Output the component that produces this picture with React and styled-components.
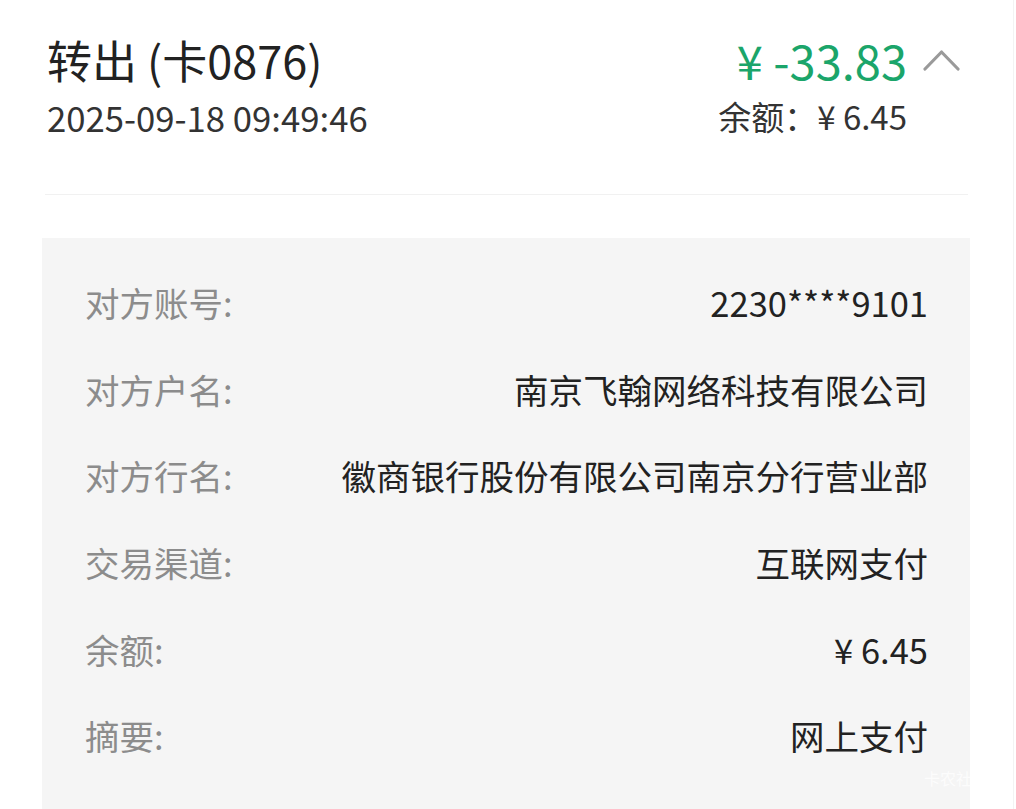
import React from "react";
import styled, { createGlobalStyle } from "styled-components";

const Global = createGlobalStyle`
  html, body { margin: 0; padding: 0; background: #ffffff; }
  body { font-family: "Noto Sans CJK SC", "Noto Sans", sans-serif; }
`;

const Page = styled.div`
  position: relative;
  width: 1016px;
  height: 809px;
  overflow: hidden;
  display: flex;
  flex-direction: column;
  background: #ffffff;
  &::after {
    content: "";
    position: absolute;
    top: 0;
    bottom: 0;
    right: 2px;
    width: 1px;
    background: #f3f3f3;
  }
`;

const Header = styled.div`
  display: flex;
  justify-content: space-between;
  align-items: flex-start;
  padding: 34px 56px 0 47px;
`;

const Col = styled.div`
  display: flex;
  flex-direction: column;
  align-items: ${(p) => (p.$right ? "flex-end" : "flex-start")};
`;

const Title = styled.div`
  font-size: 45px;
  line-height: 52px;
  color: #222222;
`;

const SubText = styled.div`
  margin-top: ${(p) => (p.$right ? "10px" : "11px")};
  margin-right: ${(p) => (p.$right ? "53px" : "0")};
  font-size: ${(p) => (p.$right ? "33px" : "34.7px")};
  line-height: 40px;
  color: #333333;
`;

const AmountRow = styled.div`
  display: flex;
  align-items: center;
  gap: 16px;
  height: 52px;
`;

const Amount = styled.div`
  font-size: 47px;
  line-height: 52px;
  color: #1ba56a;
`;

const Chevron = styled.svg`
  width: 37px;
  height: 22px;
  display: block;
`;

const Divider = styled.div`
  margin: 57px 48px 0 45px;
  height: 1px;
  background: #f1f1f1;
`;

const Panel = styled.div`
  flex: 1;
  margin: 43px 46px 0 42px;
  padding: 21px 42px 0 43px;
  background: #f5f5f5;
`;

const Row = styled.div`
  height: 86.6px;
  display: flex;
  align-items: center;
  justify-content: space-between;
  font-size: 34.5px;
`;

const Label = styled.span`
  color: #8c8c8c;
`;

const Value = styled.span`
  color: #222222;
`;

const Watermark = styled.div`
  position: absolute;
  left: 924px;
  top: 766px;
  font-size: 16px;
  color: rgba(255, 255, 255, 0.75);
`;

const rows = [
  ["对方账号:", "2230****9101"],
  ["对方户名:", "南京飞翰网络科技有限公司"],
  ["对方行名:", "徽商银行股份有限公司南京分行营业部"],
  ["交易渠道:", "互联网支付"],
  ["余额:", "¥ 6.45"],
  ["摘要:", "网上支付"],
];

export default function App() {
  return (
    <>
      <Global />
      <Page>
        <Header>
          <Col>
            <Title>转出 (卡0876)</Title>
            <SubText>2025-09-18 09:49:46</SubText>
          </Col>
          <Col $right>
            <AmountRow>
              <Amount>¥ -33.83</Amount>
              <Chevron viewBox="0 0 37 22">
                <polyline
                  points="2,20 18.5,3 35,20"
                  fill="none"
                  stroke="#9a9a9a"
                  strokeWidth="3.2"
                  strokeLinecap="round"
                  strokeLinejoin="round"
                />
              </Chevron>
            </AmountRow>
            <SubText $right>余额：¥ 6.45</SubText>
          </Col>
        </Header>
        <Divider />
        <Panel>
          {rows.map(([l, v]) => (
            <Row key={l}>
              <Label>{l}</Label>
              <Value>{v}</Value>
            </Row>
          ))}
        </Panel>
        <Watermark>卡农社区</Watermark>
      </Page>
    </>
  );
}
